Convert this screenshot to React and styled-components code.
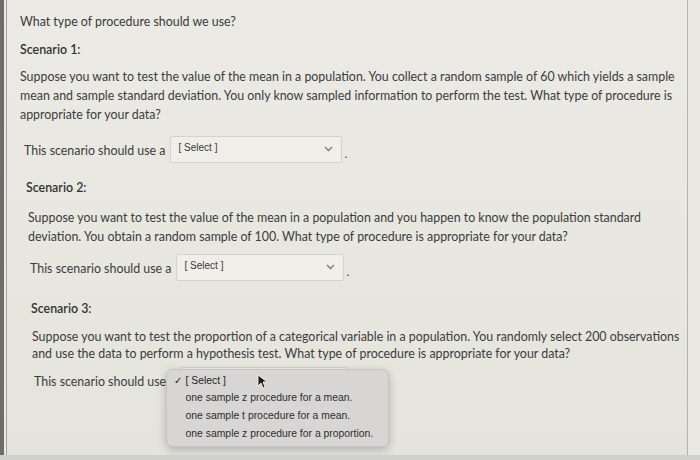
import React from "react";
import styled, { createGlobalStyle } from "styled-components";

const GlobalStyle = createGlobalStyle`
	html, body {
		margin: 0;
		padding: 0;
		background: #cfcfcb;
	}
	body {
		font-family: Lato, "Open Sans", sans-serif;
		color: #3b3b3b;
	}
`;

const scenario1 = [
	"Suppose you want to test the value of the mean in a population. You collect a random sample of 60 which yields a sample",
	"mean and sample standard deviation. You only know sampled information to perform the test. What type of procedure is",
	"appropriate for your data?",
];

const scenario2 = [
	"Suppose you want to test the value of the mean in a population and you happen to know the population standard",
	"deviation. You obtain a random sample of 100. What type of procedure is appropriate for your data?",
];

const scenario3 = [
	"Suppose you want to test the proportion of a categorical variable in a population. You randomly select 200 observations",
	"and use the data to perform a hypothesis test. What type of procedure is appropriate for your data?",
];

const options = [
	"one sample z procedure for a mean.",
	"one sample t procedure for a mean.",
	"one sample z procedure for a proportion.",
];

const Chevron = () => (
	<svg width="9" height="6" viewBox="0 0 9 6">
		<path d="M1 1l3.5 3.5L8 1" fill="none" stroke="#7a7a7a" strokeWidth="1.3" />
	</svg>
);

const Cursor = () => (
	<svg width="11" height="15" viewBox="0 0 11 15">
		<path d="M1 1v11l3-3 2 5 2-1-2-5h4z" fill="#1b1b1b" stroke="#fff" strokeWidth="0.8" />
	</svg>
);

const SelectBox = ({ width }) => (
	<StyledSelect $width={width}>
		<span>[ Select ]</span>
		<Chevron />
	</StyledSelect>
);

const Lines = ({ lines }) =>
	lines.map((l, i) => (
		<Line key={i}>{l}</Line>
	));

const App = () => {
	return (
		<>
			<GlobalStyle />
			<Page>
				<Rail />
				<Panel>
					<Title>What type of procedure should we use?</Title>
					<Heading $top={9} $indent={0}>Scenario 1:</Heading>
					<Para $top={8} $indent={0}>
						<Lines lines={scenario1} />
					</Para>
					<Row $top={13} $indent={4}>
						This scenario should use a
						<SelectBox width={172} />
						<Dot>.</Dot>
					</Row>

					<Heading $top={14} $indent={6}>Scenario 2:</Heading>
					<Para $top={11} $indent={8}>
						<Lines lines={scenario2} />
					</Para>
					<Row $top={9} $indent={10}>
						This scenario should use a
						<SelectBox width={168} />
						<Dot>.</Dot>
					</Row>

					<Heading $top={17} $indent={11}>Scenario 3:</Heading>
					<Para $top={10} $indent={12} $lh={17}>
						<Lines lines={scenario3} />
					</Para>
					<Row $top={6} $indent={14}>
						This scenario should use a
						<MenuAnchor>
							<SelectBox width={168} />
							<Menu>
								<MenuItem $checked>
									<Check>✓</Check>[ Select ]
								</MenuItem>
								{options.map((o) => (
									<MenuItem key={o}>{o}</MenuItem>
								))}
							</Menu>
							<CursorSpot>
								<Cursor />
							</CursorSpot>
						</MenuAnchor>
					</Row>
				</Panel>
			</Page>
		</>
	);
};

const Page = styled.div`
	display: flex;
	width: 700px;
	height: 455px;
	background: #e9e8e2;
	overflow: hidden;
`;

const Rail = styled.div`
	width: 4px;
	flex: none;
	background: #6d6d6b;
	margin-right: 2px;
`;

const Panel = styled.div`
	width: 682px;
	flex: none;
	border-left: 1px solid #a3a39f;
	border-right: 1px solid #b4b4af;
	padding: 12px 0 0 13px;
	box-sizing: border-box;
	background: linear-gradient(180deg, #ebeae5 0%, #e7e6df 60%, #e4e3dc 100%);
	font-size: 12.4px;
	line-height: 19px;
`;

const Title = styled.div`
	color: #3a3a3a;
`;

const Heading = styled.div`
	margin-top: ${(p) => p.$top}px;
	padding-left: ${(p) => p.$indent}px;
	font-weight: 600;
	color: #333;
`;

const Para = styled.div`
	margin: ${(p) => p.$top}px 0 0 ${(p) => p.$indent}px;
	line-height: ${(p) => p.$lh || 19}px;
	color: #3c3c3c;
`;

const Line = styled.div`
	white-space: nowrap;
`;

const Row = styled.div`
	display: flex;
	align-items: center;
	margin-top: ${(p) => p.$top}px;
	padding-left: ${(p) => p.$indent}px;
	color: #3c3c3c;
	gap: 4px;
	height: 27px;
`;

const StyledSelect = styled.div`
	display: flex;
	align-items: center;
	justify-content: space-between;
	box-sizing: border-box;
	width: ${(p) => p.$width}px;
	height: 27px;
	padding: 0 8px 0 8px;
	margin-top: -3px;
	background: #efeee9;
	border: 1px solid #d3d2cc;
	border-radius: 2px;
	font-family: "Liberation Sans", Arial, sans-serif;
	font-size: 10px;
	color: #3a3a3a;

	span {
		margin-top: -3px;
	}
`;

const Dot = styled.span`
	margin-left: -1px;
	margin-top: 6px;
	font-size: 12px;
`;

const MenuAnchor = styled.div`
	position: relative;
`;

const Menu = styled.div`
	position: absolute;
	left: -14px;
	top: -1px;
	width: 223px;
	box-sizing: border-box;
	padding: 3px 0;
	background: #d7d6d5;
	border: 1px solid #c4c3c1;
	border-radius: 6px;
	box-shadow: 0 3px 10px rgba(0, 0, 0, 0.22);
	font-family: "Liberation Sans", Arial, sans-serif;
	font-size: 10.4px;
	color: #2e2e2e;
`;

const MenuItem = styled.div`
	display: flex;
	align-items: center;
	height: ${(p) => (p.$checked ? 16 : 18)}px;
	padding-left: ${(p) => (p.$checked ? 7 : 19)}px;
	${(p) => p.$checked && "color: #222;"}
`;

const Check = styled.span`
	width: 12px;
	color: #222;
`;

const CursorSpot = styled.div`
	position: absolute;
	left: 77px;
	top: 4px;
	line-height: 0;
`;

export default App;
